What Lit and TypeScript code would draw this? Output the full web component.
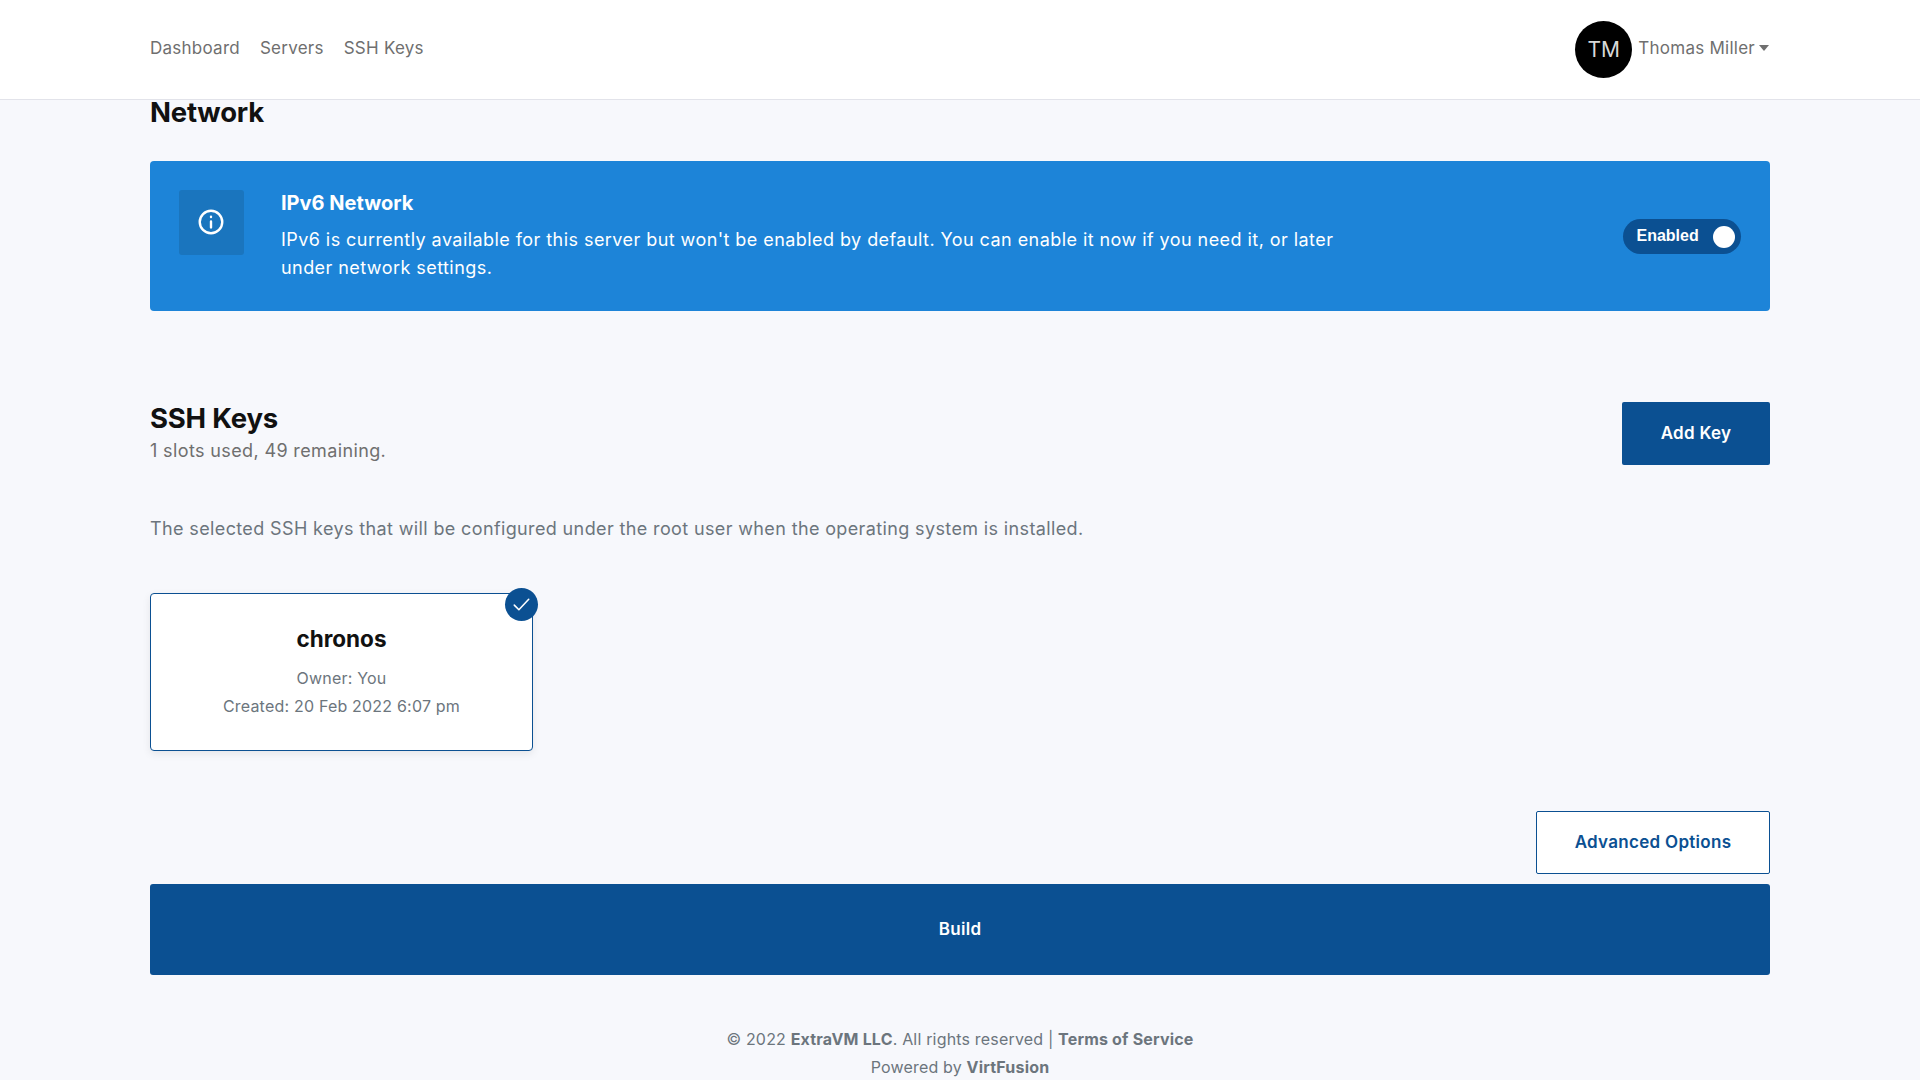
import { LitElement, html, css } from "lit";
import { customElement } from "lit/decorators.js";

@customElement("app-root")
export class AppRoot extends LitElement {
  static styles = css`
    :host { display: block; height: 1080px; overflow: hidden; background: #f7f8fc; font-family: Inter, "Liberation Sans", sans-serif; color: #6f6f6f; font-size: 18px; line-height: 28px; letter-spacing: 0.37px; }
    .header { height: 99px; background: #fff; border-bottom: 1px solid #e2e3ea; display: flex; justify-content: center; }
    .wrap { width: 1620px; margin: 0 auto; }
    .hbar { width: 1620px; display: flex; align-items: center; justify-content: space-between; }
    .nav { display: flex; gap: 20px; font-size: 17px; color: #6f6f6f; letter-spacing: 0.25px; padding-bottom: 3px; }
    .user { display: flex; align-items: center; font-size: 17px; color: #6f6f6f; letter-spacing: 0.25px; }
    .uname { padding-bottom: 3px; }
    .avatar { width: 57px; height: 57px; border-radius: 50%; background: #000; color: #d8d8d8; font-size: 21px; letter-spacing: 0; display: flex; align-items: center; justify-content: center; margin-right: 6px; }
    .caret { width: 0; height: 0; border: 5.5px solid transparent; border-top: 6px solid #6f6f6f; border-bottom: 0; margin: 0 1px 3px 4px; }
    h2 { margin: 0; font-size: 27.5px; line-height: 32px; font-weight: 700; color: #111; letter-spacing: -0.2px; }
    .net { height: 61px; }
    .net h2 { line-height: 24px; }
    .banner { height: 150px; box-sizing: border-box; background: #1d84d8; border-radius: 4px; padding: 29px 29px 0 29px; display: flex; color: #fff; }
    .ibox { width: 65px; height: 65px; border-radius: 3px; background: #1a75be; display: flex; align-items: center; justify-content: center; flex: none; margin-right: 37px; }
    .ibox svg { margin: 0 1px 1px 0; }
    .btext { width: 1070px; }
    .btitle { font-weight: 700; font-size: 20px; line-height: 26px; margin-bottom: 10px; letter-spacing: 0; }
    .bbody { line-height: 28px; letter-spacing: 0.44px; }
    .toggle { margin-left: auto; margin-top: 29px; height: 35px; width: 118px; box-sizing: border-box; border-radius: 18px; background: #0b5092; display: flex; align-items: center; justify-content: space-between; padding: 0 6px 0 13.5px; font-family: "Liberation Sans", Arial, sans-serif; font-size: 16px; font-weight: 700; letter-spacing: 0; line-height: 26px; }
    .tlabel { padding-bottom: 1px; }
    .knob { width: 22px; height: 22px; border-radius: 50%; background: #fff; }
    .ssh { display: flex; justify-content: space-between; margin-top: 91px; height: 63px; }
    .sub { margin-top: 3px; }
    .btn { box-sizing: border-box; font-weight: 600; font-size: 17px; letter-spacing: 0.3px; border-radius: 2px; display: flex; align-items: center; justify-content: center; padding-bottom: 1px; }
    .add { width: 148px; height: 63px; background: #0b5092; color: #fff; }
    .desc { margin-top: 50px; color: #6c757d; }
    .card { position: relative; box-sizing: border-box; margin-top: 50px; width: 383px; height: 158px; background: #fff; border: 1.5px solid #0b5092; border-radius: 4px; box-shadow: 0 3px 8px rgba(0,0,0,.08); text-align: center; padding-top: 29px; font-size: 16px; letter-spacing: 0.2px; color: #6c757d; }
    .card .name { font-size: 22.5px; font-weight: 700; color: #111; line-height: 32px; margin-bottom: 9px; letter-spacing: 0; }
    .check { position: absolute; right: -6px; top: -6px; width: 33px; height: 33px; border-radius: 50%; background: #0b5092; display: flex; align-items: center; justify-content: center; }
    .advrow { display: flex; justify-content: flex-end; margin-top: 60px; }
    .adv { width: 234px; height: 63px; background: #fff; color: #0b5092; border: 1.5px solid #0b5092; }
    .build { margin-top: 10px; height: 91px; background: #0b5092; color: #fff; border-radius: 3px; }
    .foot { text-align: center; font-size: 16px; margin-top: 50px; color: #6c757d; letter-spacing: 0.18px; }
    b { font-weight: 700; }
  `;
  render() {
    return html`
      <div class="header"><div class="hbar">
        <div class="nav"><span>Dashboard</span><span>Servers</span><span>SSH Keys</span></div>
        <div class="user"><div class="avatar">TM</div><span class="uname">Thomas Miller</span><div class="caret"></div></div>
      </div></div>
      <div class="wrap">
        <div class="net"><h2>Network</h2></div>
        <div class="banner">
          <div class="ibox"><svg width="26" height="26" viewBox="0 0 24 24" fill="none" stroke="#fff" stroke-width="2.2" stroke-linecap="round"><circle cx="12" cy="12" r="10.4"/><path d="M12 11.5v5.5M12 7.2v.2"/></svg></div>
          <div class="btext">
            <div class="btitle">IPv6 Network</div>
            <div class="bbody">IPv6 is currently available for this server but won't be enabled by default. You can enable it now if you need it, or later under network settings.</div>
          </div>
          <div class="toggle"><span class="tlabel">Enabled</span><div class="knob"></div></div>
        </div>
        <div class="ssh">
          <div><h2>SSH Keys</h2><div class="sub">1 slots used, 49 remaining.</div></div>
          <div class="btn add">Add Key</div>
        </div>
        <div class="desc">The selected SSH keys that will be configured under the root user when the operating system is installed.</div>
        <div class="card">
          <div class="check"><svg width="21" height="21" viewBox="0 0 16 16" fill="none" stroke="#fff" stroke-width="1.2" stroke-linecap="round" stroke-linejoin="round"><path d="M2.5 8.5l3.5 3.5 7.5-8"/></svg></div>
          <div class="name">chronos</div>
          <div>Owner: You</div>
          <div>Created: 20 Feb 2022 6:07 pm</div>
        </div>
        <div class="advrow"><div class="btn adv">Advanced Options</div></div>
        <div class="btn build">Build</div>
        <div class="foot">
          <div>© 2022 <b>ExtraVM LLC</b>. All rights reserved | <b>Terms of Service</b></div>
          <div>Powered by <b>VirtFusion</b></div>
        </div>
      </div>
    `;
  }
}
